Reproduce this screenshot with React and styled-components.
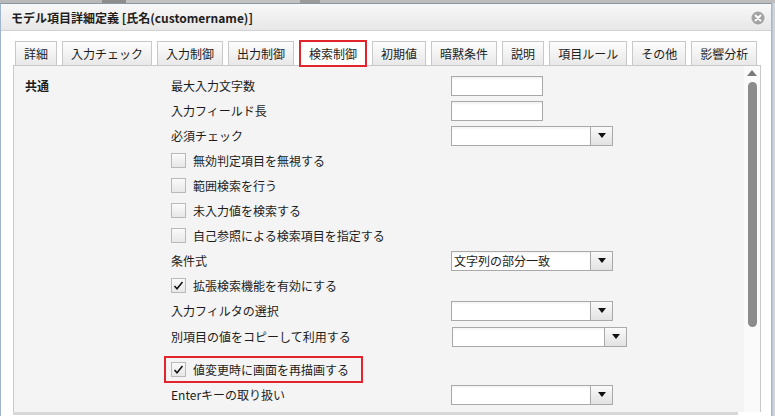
import styled, { createGlobalStyle } from "styled-components";

const GlobalStyle = createGlobalStyle`
  html, body {
    margin: 0;
    padding: 0;
  }
  body {
    font-family: "Noto Sans CJK JP", "Noto Sans", sans-serif;
    font-size: 12px;
    color: #1c1c1c;
    background: #fff;
  }
`;

const Page = styled.div`
  width: 775px;
  height: 416px;
  overflow: hidden;
  display: flex;
  flex-direction: column;
  background: #cfcfcf;
`;

const TopStrip = styled.div`
  height: 3px;
  flex-shrink: 0;
  background: linear-gradient(
    90deg,
    #b9b9b9 0 102px,
    #8d8d8d 102px 126px,
    #c2c2c2 126px 300px,
    #9a9a9a 300px 320px,
    #bdbdbd 320px
  );
`;

const MainRow = styled.div`
  flex: 1;
  display: flex;
  min-height: 0;
`;

const Backdrop = styled.div`
  flex: 1;
  background: #d4d4d4;
  border-left: 1px solid #b9c6d4;
`;

const Dialog = styled.div`
  width: 772px;
  box-sizing: border-box;
  display: flex;
  flex-direction: column;
  background: #fff;
  border-top: 1px solid #8b96a1;
  border-left: 1px solid #9fb5cb;
  border-right: 1px solid #a7b7c7;
`;

const TitleBar = styled.div`
  height: 27px;
  flex-shrink: 0;
  box-sizing: border-box;
  display: flex;
  align-items: center;
  justify-content: space-between;
  padding: 1px 6px 0 10px;
  background: linear-gradient(#f8f8f8, #e7e7e7);
  border-bottom: 1px solid #d2d2d2;
`;

const Title = styled.span`
  font-weight: 700;
  font-size: 12px;
  line-height: 1;
  color: #1e1e1e;
`;

const CloseIcon = () => (
  <svg width="14" height="14" viewBox="0 0 14 14">
    <circle cx="7" cy="7" r="6.5" fill="#a3a3a3" />
    <path d="M4.5 4.5 L9.5 9.5 M9.5 4.5 L4.5 9.5" stroke="#fff" strokeWidth="1.8" strokeLinecap="round" />
  </svg>
);

const Body = styled.div`
  flex: 1;
  display: flex;
  flex-direction: column;
  padding: 10px 10px 0 12px;
  min-height: 0;
`;

const TabRow = styled.div`
  display: flex;
  align-items: flex-start;
  gap: 5px;
  padding-left: 2px;
  flex-shrink: 0;
`;

const Tab = styled.div`
  height: ${(p) => (p.$active ? "27px" : "24px")};
  margin-top: ${(p) => (p.$active ? "-1px" : "0")};
  margin-bottom: ${(p) => (p.$active ? "-2px" : "0")};
  box-sizing: border-box;
  display: flex;
  align-items: center;
  padding: 1px 8px 0;
  border: ${(p) => (p.$active ? "2px solid #e1252b" : "1px solid #c8c8c8")};
  border-bottom: ${(p) => (p.$active ? "2px solid #e1252b" : "none")};
  background: ${(p) => (p.$active ? "#fff" : "linear-gradient(#fdfdfd, #e8e8e8)")};
  font-size: 12px;
  line-height: 1;
  white-space: nowrap;
  position: relative;
  z-index: 1;
`;

const Panel = styled.div`
  height: 347px;
  flex-shrink: 0;
  box-sizing: border-box;
  display: flex;
  border: 1px solid #c9c9c9;
  border-bottom: none;
  background: #f4f4f4;
  overflow: hidden;
`;

const BottomBand = styled.div`
  height: 3px;
  margin-right: 23px;
  background: #d8d8d8;
`;

const Content = styled.div`
  flex: 1;
  display: flex;
  padding: 7px 0 0 11px;
`;

const SectionLabel = styled.div`
  width: 146px;
  flex-shrink: 0;
  font-weight: 700;
  line-height: 25px;
`;

const Form = styled.div`
  display: flex;
  flex-direction: column;
`;

const Row = styled.div`
  height: ${(p) => p.$h || 25}px;
  display: flex;
  align-items: center;
`;

const Label = styled.div`
  width: 280px;
  flex-shrink: 0;
  padding-top: 1px;
  line-height: 1;
  white-space: nowrap;
`;

const TextInput = styled.div`
  width: 92px;
  height: 20px;
  box-sizing: border-box;
  border: 1px solid #a9a9a9;
  background: #fff;
  box-shadow: inset 0 2px 2px rgba(0, 0, 0, 0.05);
`;

const SelectBox = styled.div`
  width: ${(p) => p.$w || 162}px;
  height: 20px;
  margin-left: ${(p) => p.$shift || 0}px;
  box-sizing: border-box;
  display: flex;
  border: 1px solid #a9a9a9;
  background: #fff;
`;

const SelectValue = styled.div`
  flex: 1;
  display: flex;
  align-items: center;
  padding: 1px 0 0 2px;
  font-size: 12px;
  line-height: 1;
  box-shadow: inset 0 2px 2px rgba(0, 0, 0, 0.04);
`;

const SelectButton = styled.div`
  width: 21px;
  display: flex;
  align-items: center;
  justify-content: center;
  border-left: 1px solid #a9a9a9;
  background: linear-gradient(#fafafa, #e2e2e2);
`;

const Select = ({ value, w, shift }) => (
  <SelectBox $w={w} $shift={shift}>
    <SelectValue>{value}</SelectValue>
    <SelectButton>
      <svg width="8" height="5" viewBox="0 0 8 5">
        <path d="M0 0 H8 L4 5 Z" fill="#111" />
      </svg>
    </SelectButton>
  </SelectBox>
);

const CheckRow = styled.div`
  height: 25px;
  display: flex;
  align-items: center;
  gap: 7px;
  line-height: 1;
  white-space: nowrap;
`;

const Box = styled.span`
  width: 15px;
  height: 15px;
  box-sizing: border-box;
  flex-shrink: 0;
  display: flex;
  align-items: center;
  justify-content: center;
  border: 1px solid #b9b9b9;
  background: linear-gradient(#fbfbfb, #e7e7e7);
`;

const CheckBox = ({ checked }) => (
  <Box>
    {checked && (
      <svg width="11" height="11" viewBox="0 0 11 11">
        <path d="M1.5 6 L4 8.8 L9.5 2" fill="none" stroke="#111" strokeWidth="1.5" />
      </svg>
    )}
  </Box>
);

const Highlight = styled.div`
  width: 199px;
  height: 27px;
  box-sizing: border-box;
  margin: 6px 0 0 -7px;
  padding-left: 5px;
  display: flex;
  align-items: center;
  gap: 7px;
  border: 2px solid #e1252b;
  line-height: 1;
  white-space: nowrap;
`;

const ScrollTrack = styled.div`
  width: 16px;
  flex-shrink: 0;
  display: flex;
  flex-direction: column;
  align-items: center;
  padding-top: 4px;
  background: #fafafa;
`;

const Thumb = styled.div`
  width: 9px;
  height: 245px;
  margin-top: 6px;
  border-radius: 5px;
  background: #8b8b8b;
`;

const tabs = [
  "詳細",
  "入力チェック",
  "入力制御",
  "出力制御",
  "検索制御",
  "初期値",
  "暗黙条件",
  "説明",
  "項目ルール",
  "その他",
  "影響分析",
];

export default function App() {
  return (
    <Page>
      <GlobalStyle />
      <TopStrip />
      <MainRow>
        <Dialog>
          <TitleBar>
            <Title>モデル項目詳細定義 [氏名(customername)]</Title>
            <CloseIcon />
          </TitleBar>
          <Body>
            <TabRow>
              {tabs.map((t) => (
                <Tab key={t} $active={t === "検索制御"}>
                  {t}
                </Tab>
              ))}
            </TabRow>
            <Panel>
              <Content>
                <SectionLabel>共通</SectionLabel>
                <Form>
                  <Row>
                    <Label>最大入力文字数</Label>
                    <TextInput />
                  </Row>
                  <Row>
                    <Label>入力フィールド長</Label>
                    <TextInput />
                  </Row>
                  <Row>
                    <Label>必須チェック</Label>
                    <Select />
                  </Row>
                  <CheckRow>
                    <CheckBox />
                    無効判定項目を無視する
                  </CheckRow>
                  <CheckRow>
                    <CheckBox />
                    範囲検索を行う
                  </CheckRow>
                  <CheckRow>
                    <CheckBox />
                    未入力値を検索する
                  </CheckRow>
                  <CheckRow>
                    <CheckBox />
                    自己参照による検索項目を指定する
                  </CheckRow>
                  <Row>
                    <Label>条件式</Label>
                    <Select value="文字列の部分一致" />
                  </Row>
                  <CheckRow>
                    <CheckBox checked />
                    拡張検索機能を有効にする
                  </CheckRow>
                  <Row>
                    <Label>入力フィルタの選択</Label>
                    <Select />
                  </Row>
                  <Row $h={27}>
                    <Label>別項目の値をコピーして利用する</Label>
                    <Select w={175} shift={1} />
                  </Row>
                  <Highlight>
                    <CheckBox checked />
                    値変更時に画面を再描画する
                  </Highlight>
                  <Row $h={23}>
                    <Label>Enterキーの取り扱い</Label>
                    <Select />
                  </Row>
                </Form>
              </Content>
              <ScrollTrack>
                <svg width="10" height="6" viewBox="0 0 10 6">
                  <path d="M0 6 L5 0 L10 6 Z" fill="#7a7a7a" />
                </svg>
                <Thumb />
              </ScrollTrack>
            </Panel>
            <BottomBand />
          </Body>
        </Dialog>
        <Backdrop />
      </MainRow>
    </Page>
  );
}
